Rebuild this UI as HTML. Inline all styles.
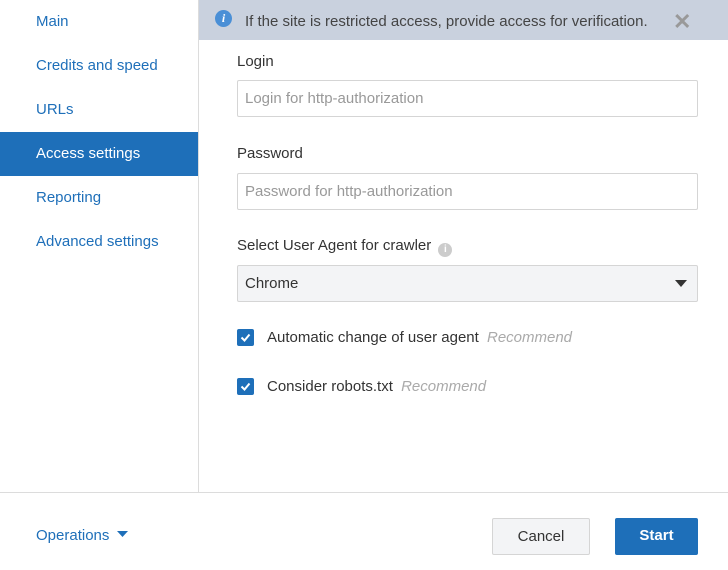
<!DOCTYPE html>
<html><head><style>
*{box-sizing:border-box;margin:0;padding:0}
body{width:728px;height:570px;overflow:hidden;background:#fff;font-family:"Liberation Sans",sans-serif;position:relative;color:#333}
.side{position:absolute;left:0;top:0;width:199px;height:492px;border-right:1px solid #dcdcdc}
.side div{height:44px;line-height:44px;padding-left:36px;font-size:15px;color:#1e6fb9}
.side .act{background:#1e6fb9;color:#fff}
.banner{position:absolute;left:199px;top:0;width:529px;height:40px;background:#c9d1de;font-size:15px;color:#444;line-height:44px;padding-left:46px}
.ic{position:absolute;left:16px;top:11px;width:17px;height:17px;border-radius:50%;background:#4a8fd6;color:#fff;font-size:12px;font-weight:bold;font-style:italic;text-align:center;line-height:17px;font-family:"Liberation Serif",serif}
.x{position:absolute;left:474px;top:0;font-size:22px;color:#999;font-weight:bold}
.lbl{position:absolute;left:237px;font-size:15px;color:#333}
.inp{position:absolute;left:237px;width:461px;height:37px;border:1px solid #d5d5d5;border-radius:2px;font-size:15px;color:#999;padding-left:7px;line-height:35px}
.sel{background:#f3f4f6;color:#333}
.cb{position:absolute;left:237px;width:17px;height:17px;background:#1e6fb9;border-radius:2px}
.ct{position:absolute;left:267px;font-size:15px;color:#333}
.ct i{color:#aaa;margin-left:4px}
.foot{position:absolute;left:0;top:492px;width:728px;border-top:1px solid #dcdcdc}
.btn{position:absolute;top:518px;height:37px;font-size:15px;line-height:35px;text-align:center;border-radius:2px}
</style></head><body>
<div class="side">
<div>Main</div><div>Credits and speed</div><div>URLs</div><div class="act">Access settings</div><div>Reporting</div><div>Advanced settings</div>
</div>
<div class="banner"><span class="ic" style="top:10px">i</span>If the site is restricted access, provide access for verification.<span class="x">✕</span></div>
<div class="lbl" style="top:53px">Login</div>
<div class="inp" style="top:80px">Login for http-authorization</div>
<div class="lbl" style="top:145px">Password</div>
<div class="inp" style="top:173px">Password for http-authorization</div>
<div class="lbl" style="top:237px">Select User Agent for crawler <span style="display:inline-block;width:14px;height:14px;border-radius:50%;background:#ccc;color:#fff;font-size:10px;text-align:center;line-height:14px;vertical-align:-2px;margin-left:3px;font-weight:bold">i</span></div>
<div class="inp sel" style="top:265px">Chrome<svg style="position:absolute;right:10px;top:14px" width="12" height="7"><path d="M0 0H12L6 7Z" fill="#333"/></svg></div>
<div class="cb" style="top:329px"><svg width="17" height="17"><path d="M4.5 8.5l3 3 5-6" stroke="#fff" stroke-width="2" fill="none"/></svg></div>
<div class="ct" style="top:329px">Automatic change of user agent <i>Recommend</i></div>
<div class="cb" style="top:378px"><svg width="17" height="17"><path d="M4.5 8.5l3 3 5-6" stroke="#fff" stroke-width="2" fill="none"/></svg></div>
<div class="ct" style="top:378px">Consider robots.txt <i>Recommend</i></div>
<div class="foot"></div>
<div style="position:absolute;left:36px;top:527px;font-size:15px;color:#1e6fb9">Operations <svg width="11" height="7" style="margin-left:3px;vertical-align:2px"><path d="M0 0H11L5.5 6Z" fill="#1e6fb9"/></svg></div>
<div class="btn" style="left:492px;width:98px;background:#f3f4f6;border:1px solid #d5d5d5;color:#333">Cancel</div>
<div class="btn" style="left:615px;width:83px;background:#1e6fb9;color:#fff;font-weight:bold">Start</div>
</body></html>
